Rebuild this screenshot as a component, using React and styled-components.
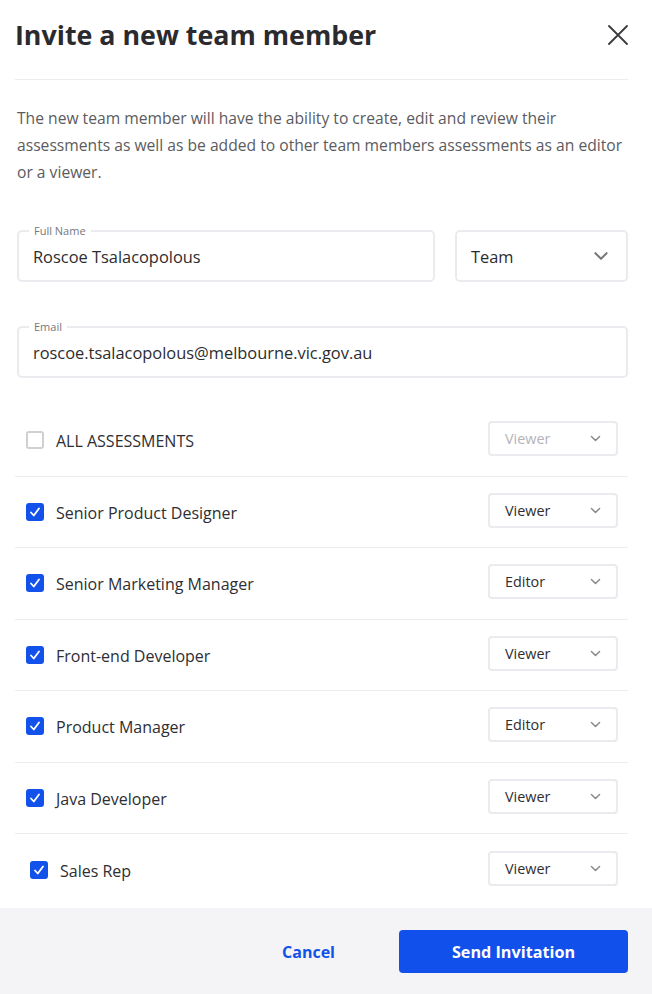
import React from "react";
import styled, { createGlobalStyle } from "styled-components";

const Global = createGlobalStyle`
  html, body { margin: 0; padding: 0; background: #ffffff; }
  body { font-family: "Open Sans", "Liberation Sans", sans-serif; color: #2c2c30; }
  * { box-sizing: border-box; }
`;

const Modal = styled.div`
  width: 652px;
  height: 994px;
  display: flex;
  flex-direction: column;
  background: #fff;
`;

const Header = styled.div`
  margin: 0 24px 0 15px;
  height: 80px;
  padding-top: 19px;
  border-bottom: 1px solid #ececef;
  display: flex;
  justify-content: space-between;
  align-items: flex-start;
`;

const Title = styled.h1`
  margin: 0;
  font-size: 26.8px;
  line-height: 32px;
  font-weight: 700;
  color: #2a2a2f;
`;

const CloseButton = styled.button`
  border: 0;
  background: none;
  padding: 0;
  width: 22px;
  height: 22px;
  margin-top: 5px;
  margin-right: -1px;
  display: flex;
  align-items: center;
  justify-content: center;
  cursor: pointer;
  color: #3a3a3e;
`;

const Body = styled.div`
  flex: 1;
  padding: 0 24px 0 17px;
`;

const Intro = styled.p`
  margin: 25px 0 0;
  font-size: 15.65px;
  line-height: 27px;
  color: #5b5b60;
`;

const FieldRow = styled.div`
  display: flex;
  gap: 20px;
  margin-top: ${(p) => p.$top}px;
`;

const Field = styled.div`
  position: relative;
  flex: ${(p) => (p.$width ? `0 0 ${p.$width}px` : "1")};
  height: 52px;
  border: 2px solid #ebebef;
  border-radius: 5px;
  display: flex;
  align-items: center;
  justify-content: space-between;
  padding: 0 ${(p) => (p.$width ? 16 : 14)}px 0 14px;
  font-size: 16.4px;
  color: #2c2c30;
`;

const FloatLabel = styled.span`
  position: absolute;
  top: -8px;
  left: 10px;
  padding: 0 5px;
  background: #fff;
  font-size: 11px;
  line-height: 14px;
  color: #77777c;
`;

const List = styled.div`
  margin: 27px 0 0 -2px;
`;

const Row = styled.div`
  height: 71.5px;
  display: flex;
  align-items: center;
  padding: 0 10px 0 ${(p) => 11 + (p.$shift || 0)}px;
  border-bottom: ${(p) => (p.$last ? "0" : "1px solid #ececef")};
`;

const Check = styled.span`
  width: 18px;
  height: 18px;
  border-radius: 3px;
  flex: 0 0 18px;
  display: flex;
  align-items: center;
  justify-content: center;
  background: ${(p) => (p.$on ? "#1352ea" : "#fff")};
  border: ${(p) => (p.$on ? "0" : "2px solid #cfcfd4")};
`;

const RowLabel = styled.span`
  margin-left: 12px;
  flex: 1;
  font-size: 16px;
  padding-top: 2px;
  color: #2e2e33;
`;

const RoleSelect = styled.div`
  width: 130px;
  height: 35px;
  border: 2px solid #ebebef;
  border-radius: 4px;
  display: flex;
  align-items: center;
  justify-content: space-between;
  padding: 0 14px 0 15px;
  font-size: 14.4px;
  color: ${(p) => (p.$disabled ? "#b3b3b8" : "#2e2e33")};
  margin-top: -3px;
`;

const Footer = styled.div`
  height: 86px;
  background: #f4f4f6;
  display: flex;
  justify-content: flex-end;
  align-items: flex-start;
  padding: 22px 24px 0 0;
`;

const CancelButton = styled.button`
  border: 0;
  background: none;
  height: 43px;
  padding: 0 32px;
  margin-right: 32px;
  font-family: inherit;
  font-size: 16px;
  font-weight: 700;
  color: #1352ea;
  cursor: pointer;
`;

const SendButton = styled.button`
  border: 0;
  width: 229px;
  height: 43px;
  border-radius: 4px;
  background: #1150ea;
  color: #fff;
  font-family: inherit;
  font-size: 16.2px;
  font-weight: 700;
  cursor: pointer;
`;

const Chevron = ({ size = 16, color = "#77777c", stroke = 2 }) => (
  <svg width={size} height={size} viewBox="0 0 16 16" fill="none">
    <path d="M3 5.5 L8 10.5 L13 5.5" stroke={color} strokeWidth={stroke} strokeLinecap="round" strokeLinejoin="round" />
  </svg>
);

const CheckMark = () => (
  <svg width="12" height="12" viewBox="0 0 12 12" fill="none">
    <path d="M2 6.5 L4.8 9.5 L10 2.5" stroke="#fff" strokeWidth="1.8" strokeLinecap="round" strokeLinejoin="round" />
  </svg>
);

const rows = [
  { label: "ALL ASSESSMENTS", role: "Viewer", on: false, disabled: true },
  { label: "Senior Product Designer", role: "Viewer", on: true },
  { label: "Senior Marketing Manager", role: "Editor", on: true },
  { label: "Front-end Developer", role: "Viewer", on: true },
  { label: "Product Manager", role: "Editor", on: true },
  { label: "Java Developer", role: "Viewer", on: true },
  { label: "Sales Rep", role: "Viewer", on: true, shift: 4 },
];

export default function App() {
  return (
    <>
      <Global />
      <Modal>
        <Header>
          <Title>Invite a new team member</Title>
          <CloseButton aria-label="Close">
            <svg width="20" height="20" viewBox="0 0 20 20" fill="none">
              <path d="M1 1 L19 19 M19 1 L1 19" stroke="#3a3a3e" strokeWidth="1.8" strokeLinecap="round" />
            </svg>
          </CloseButton>
        </Header>
        <Body>
          <Intro>
            The new team member will have the ability to create, edit and review their assessments as well as be added
            to other team members assessments as an editor or a viewer.
          </Intro>
          <FieldRow $top={44}>
            <Field>
              <FloatLabel>Full Name</FloatLabel>
              Roscoe Tsalacopolous
            </Field>
            <Field $width={173}>
              Team
              <Chevron size={18} color="#77777c" stroke={1.8} />
            </Field>
          </FieldRow>
          <FieldRow $top={44}>
            <Field>
              <FloatLabel>Email</FloatLabel>
              roscoe.tsalacopolous@melbourne.vic.gov.au
            </Field>
          </FieldRow>
          <List>
            {rows.map((r, i) => (
              <Row key={r.label} $last={i === rows.length - 1} $shift={r.shift}>
                <Check $on={r.on}>{r.on && <CheckMark />}</Check>
                <RowLabel>{r.label}</RowLabel>
                <RoleSelect $disabled={r.disabled}>
                  {r.role}
                  <Chevron size={13} color="#88888d" stroke={1.8} />
                </RoleSelect>
              </Row>
            ))}
          </List>
        </Body>
        <Footer>
          <CancelButton>Cancel</CancelButton>
          <SendButton>Send Invitation</SendButton>
        </Footer>
      </Modal>
    </>
  );
}
